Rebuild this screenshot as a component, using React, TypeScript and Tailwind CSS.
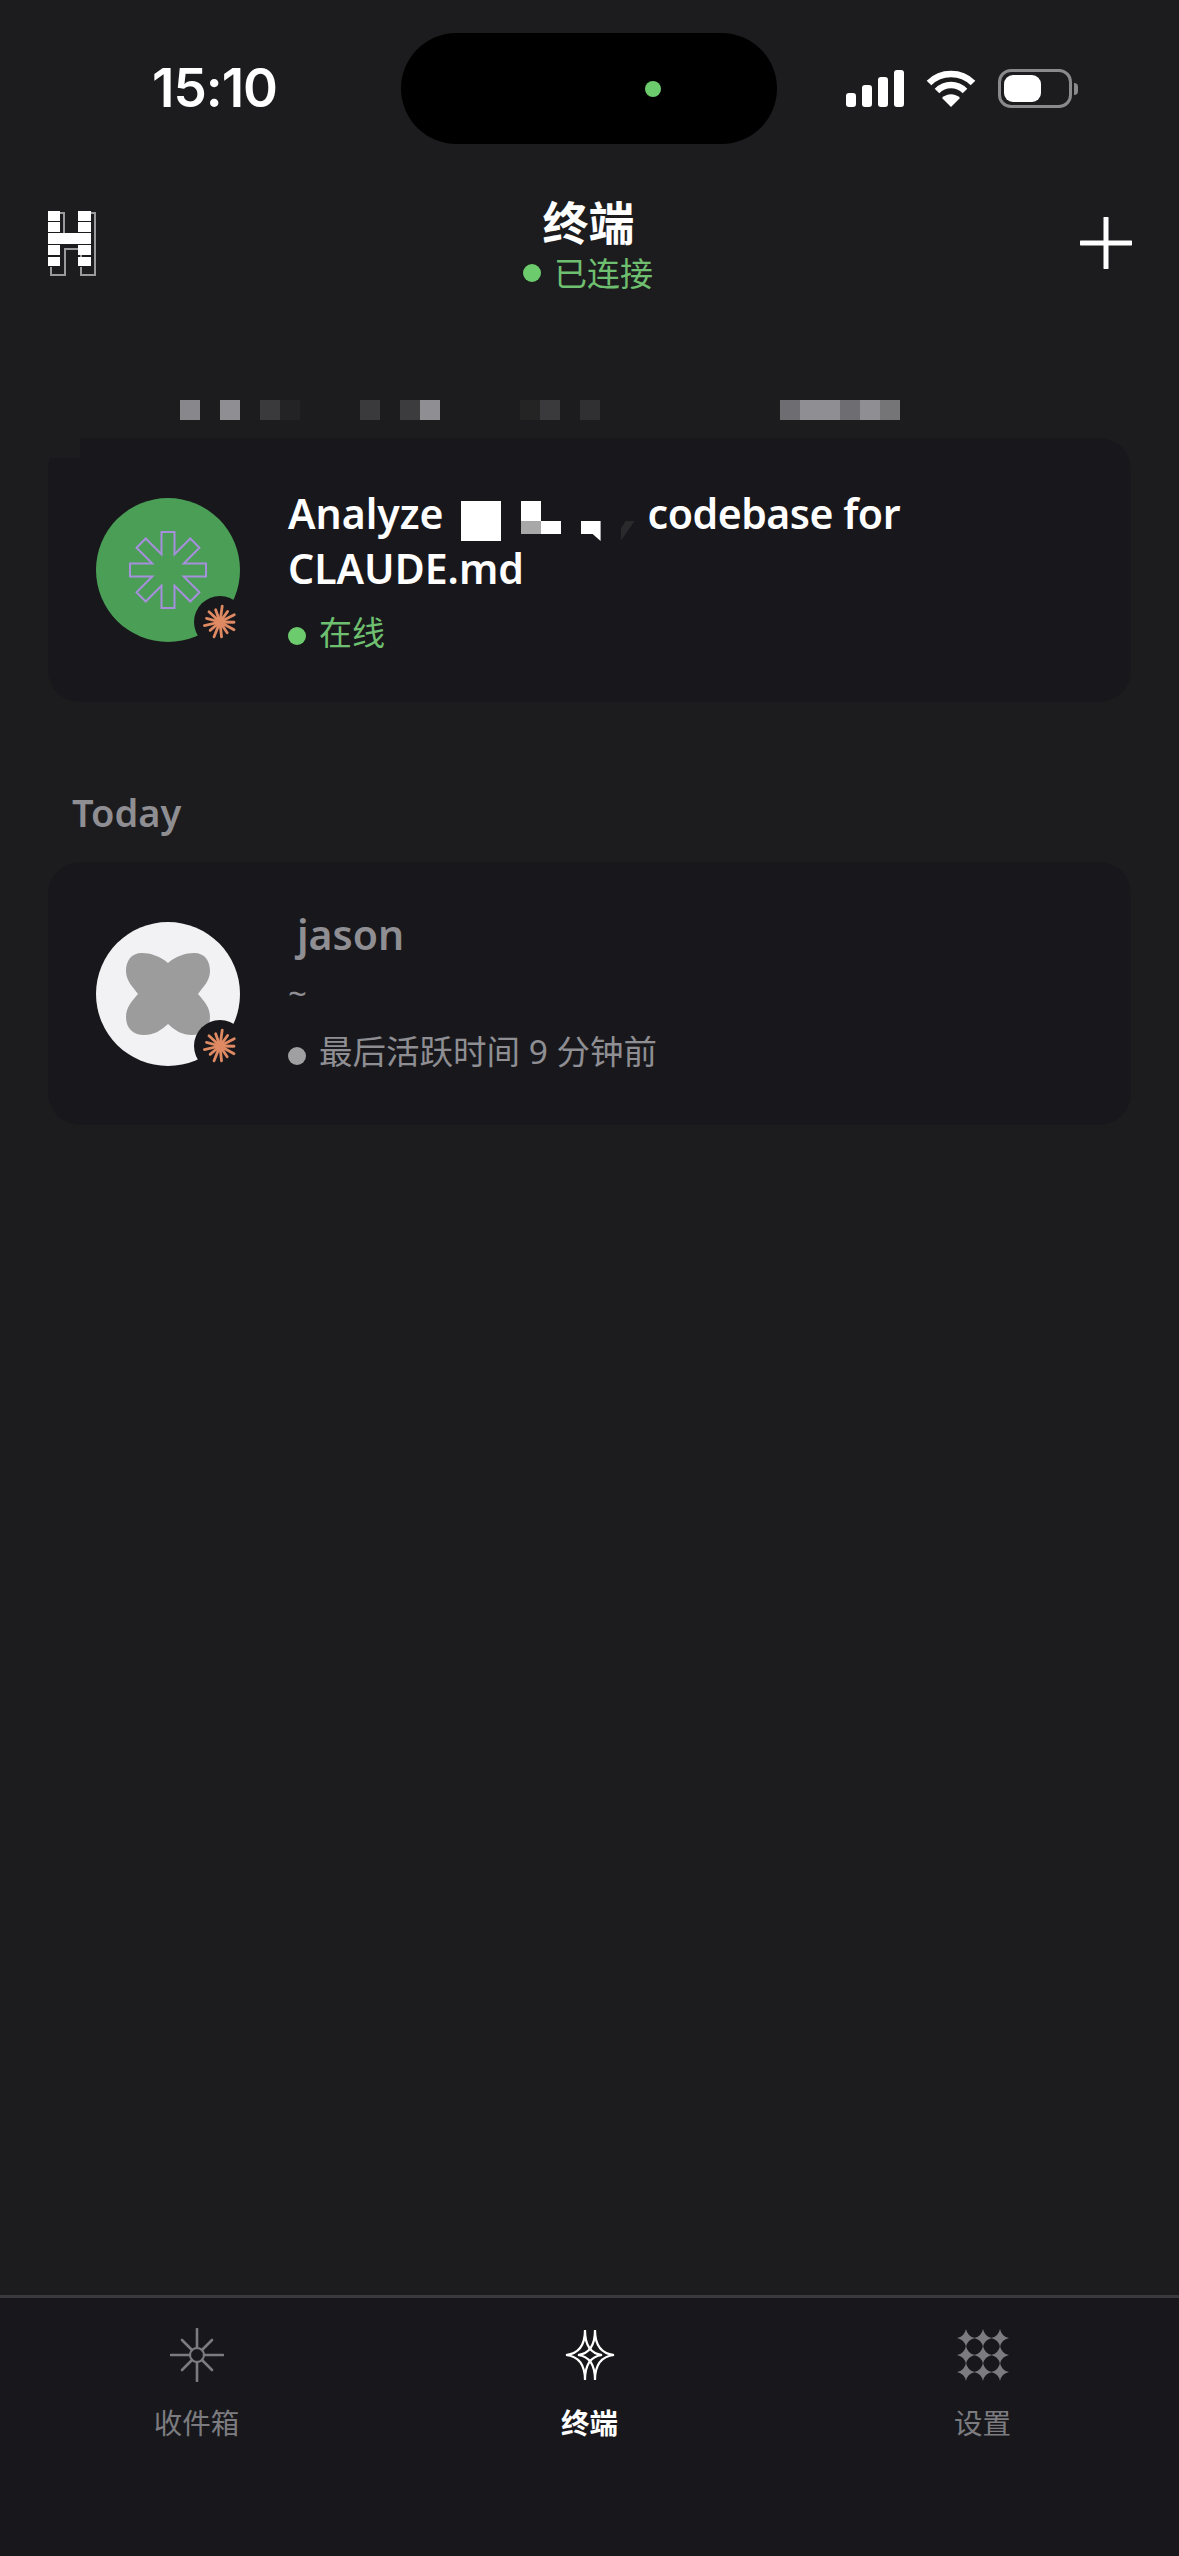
const pixelCells = [
  "w-5 bg-[#88888c]",
  "w-5",
  "w-5 bg-[#8e8e93]",
  "w-5",
  "w-5 bg-[#3a3a3c]",
  "w-5 bg-[#232325]",
  "w-5",
  "w-5",
  "w-5",
  "w-5 bg-[#3a3a3c]",
  "w-5",
  "w-5 bg-[#3c3c3f]",
  "w-5 bg-[#8e8e93]",
  "w-5",
  "w-5",
  "w-5",
  "w-5",
  "w-5 bg-[#242424]",
  "w-5 bg-[#3a3a3c]",
  "w-5",
  "w-5 bg-[#303032]",
  "w-5",
  "w-5",
  "w-5",
  "w-5",
  "w-5",
  "w-5",
  "w-5",
  "w-5",
  "w-5",
  "w-5 bg-[#6e6e72]",
  "w-10 bg-[#8e8e93]",
  "w-5 bg-[#6e6e72]",
  "w-5 bg-[#8e8e93]",
  "w-5 bg-[#757578]",
];

function polar(cx: number, cy: number, r: number, deg: number) {
  const a = (deg * Math.PI) / 180;
  return [cx + r * Math.sin(a), cy - r * Math.cos(a)];
}

function ClaudeBadge() {
  const rays = [16, 13, 16, 14, 16, 13, 15, 16, 13, 16, 14, 15, 13];
  return (
    <div className="absolute left-[98px] top-[98px] flex h-[52px] w-[52px] items-center justify-center rounded-full bg-[#18181c]">
      <svg width="36" height="36" viewBox="0 0 36 36">
        {rays.map((r, i) => {
          const [x, y] = polar(18, 18, r, (i * 360) / rays.length + 8);
          return (
            <line
              key={i}
              x1="18"
              y1="18"
              x2={x}
              y2={y}
              stroke="#df8a63"
              strokeWidth="2.8"
              strokeLinecap="round"
            />
          );
        })}
      </svg>
    </div>
  );
}

function AsteriskOutline() {
  const pts: string[] = [];
  for (let i = 0; i < 8; i++) {
    const deg = i * 45;
    const a = (deg * Math.PI) / 180;
    const ux = Math.sin(a);
    const uy = -Math.cos(a);
    const px = Math.cos(a);
    const py = Math.sin(a);
    const R = 38;
    const w = 6.5;
    pts.push(`${40 + ux * R - px * w},${40 + uy * R - py * w}`);
    pts.push(`${40 + ux * R + px * w},${40 + uy * R + py * w}`);
    const [ix, iy] = polar(40, 40, 17, deg + 22.5);
    pts.push(`${ix},${iy}`);
  }
  return (
    <svg width="80" height="80" viewBox="0 0 80 80">
      <polygon points={pts.join(" ")} fill="none" stroke="#a68fdc" strokeWidth="2" />
    </svg>
  );
}

function Clover() {
  return (
    <svg width="84" height="82" viewBox="0 0 84 82">
      <path
        fill="#9c9c9c"
        d="M42 10C50 3 60 0 68 0C79 0 84 8 84 18C84 28 77 34 72 41C78 48 84 54 84 64C84 76 76 82 66 82C56 82 50 78 42 71C34 78 28 82 18 82C8 82 0 76 0 64C0 54 6 48 12 41C7 34 0 28 0 18C0 8 5 0 16 0C24 0 34 3 42 10Z"
      />
    </svg>
  );
}

function HLogo() {
  return (
    <svg width="50" height="68" viewBox="0 0 50 68">
      <path
        d="M13 4H17V24M44 4H48V66H34V58M4 58V66H18V40H34V48"
        fill="none"
        stroke="#9a9a9c"
        strokeWidth="2"
      />
      <g fill="#fff">
        <rect x="1" y="2" width="12" height="10" />
        <rect x="1" y="13" width="12" height="10" />
        <rect x="31" y="2" width="13" height="10" />
        <rect x="31" y="13" width="13" height="10" />
        <rect x="1" y="24" width="43" height="11" />
        <rect x="1" y="36" width="12" height="10" />
        <rect x="1" y="48" width="12" height="9" />
        <rect x="31" y="36" width="13" height="10" />
        <rect x="31" y="48" width="13" height="9" />
      </g>
    </svg>
  );
}

function StatusIcons() {
  return (
    <div className="flex items-center gap-[22px]">
      <div className="flex h-[37px] items-end gap-[6px]">
        <span className="h-[14px] w-[10px] rounded-[3px] bg-white" />
        <span className="h-[22px] w-[10px] rounded-[3px] bg-white" />
        <span className="h-[30px] w-[10px] rounded-[3px] bg-white" />
        <span className="h-[37px] w-[10px] rounded-[3px] bg-white" />
      </div>
      <svg width="50" height="37" viewBox="0 0 50 37">
        <path d="M25 37L16 28C21 23 29 23 34 28Z" fill="#fff" />
        <path d="M11 21C19 13 31 13 39 21" fill="none" stroke="#fff" strokeWidth="6.5" />
        <path d="M3 13C15 1 35 1 47 13" fill="none" stroke="#fff" strokeWidth="6.5" />
      </svg>
      <div className="flex items-center gap-[2px]">
        <div className="flex h-[39px] w-[74px] items-center rounded-[13px] border-[3px] border-[#8a8a8c] pl-[3px]">
          <span className="h-[27px] w-[37px] rounded-[9px] bg-white" />
        </div>
        <span className="h-[12px] w-[4px] rounded-r-full bg-[#8a8a8c]" />
      </div>
    </div>
  );
}

function InboxIcon() {
  return (
    <svg width="54" height="54" viewBox="0 0 54 54">
      <g stroke="#7c7c80" strokeWidth="2.6" strokeLinecap="round">
        <line x1="27" y1="1" x2="27" y2="20" />
        <line x1="27" y1="34" x2="27" y2="53" />
        <line x1="1" y1="27" x2="20" y2="27" />
        <line x1="34" y1="27" x2="53" y2="27" />
        <line x1="12" y1="12" x2="22" y2="22" />
        <line x1="42" y1="12" x2="32" y2="22" />
        <line x1="12" y1="42" x2="22" y2="32" />
        <line x1="42" y1="42" x2="32" y2="32" />
      </g>
      <circle cx="27" cy="27" r="7" fill="none" stroke="#7c7c80" strokeWidth="2" />
    </svg>
  );
}

function TerminalIcon() {
  return (
    <svg width="50" height="52" viewBox="0 0 50 52">
      <g fill="none" stroke="#fff" strokeWidth="2.2">
        <path d="M20 1Q20 24 1 26Q20 28 20 51Q20 28 37 26Q20 24 20 1Z" />
        <path d="M30 1Q30 24 13 26Q30 28 30 51Q30 28 49 26Q30 24 30 1Z" />
      </g>
    </svg>
  );
}

function SettingsIcon() {
  const pos = [9, 26, 43];
  return (
    <svg width="52" height="52" viewBox="0 0 52 52">
      <g fill="#7c7c80">
        {pos.map((y) =>
          pos.map((x) => (
            <path
              key={`${x}-${y}`}
              d={`M${x} ${y - 9}Q${x + 1.5} ${y - 1.5} ${x + 9} ${y}Q${x + 1.5} ${y + 1.5} ${x} ${y + 9}Q${x - 1.5} ${y + 1.5} ${x - 9} ${y}Q${x - 1.5} ${y - 1.5} ${x} ${y - 9}Z`}
            />
          ))
        )}
      </g>
    </svg>
  );
}

export default function App() {
  return (
    <div className="flex h-[2556px] w-[1179px] flex-col overflow-hidden bg-[#1c1c1e] font-['Noto_Sans','Noto_Sans_CJK_SC',sans-serif]">
      <div className="flex h-[144px] items-start pt-[33px]">
        <div className="flex h-[111px] w-[401px] items-center justify-center pl-[28px]">
          <span className="font-['Inter',sans-serif] text-[53px] leading-none font-semibold tracking-[-1px] text-white">
            15:10
          </span>
        </div>
        <div className="flex h-[111px] w-[376px] items-center justify-end rounded-[56px] bg-black pr-[116px]">
          <span className="h-4 w-4 rounded-full bg-[#6ccb6c]" />
        </div>
        <div className="flex h-[111px] flex-1 items-center pl-[69px]">
          <StatusIcons />
        </div>
      </div>

      <div className="flex items-center justify-between pt-[48px] pr-[47px] pl-[47px]">
        <HLogo />
        <div className="flex flex-col items-center">
          <span className="text-[46px] leading-[60px] font-bold text-white">终端</span>
          <div className="flex h-[42px] items-center gap-[13px] pr-[1px]">
            <span className="h-[18px] w-[18px] rounded-full bg-[#6ccb6c]" />
            <span className="text-[33px] leading-none text-[#6fbf70]">已连接</span>
          </div>
        </div>
        <svg width="52" height="52" viewBox="0 0 52 52">
          <path d="M26 1V51M1 26H51" stroke="#fff" strokeWidth="5" strokeLinecap="round" />
        </svg>
      </div>

      <div className="mt-[106px] flex h-5 pl-[180px]">
        {pixelCells.map((c, i) => (
          <span key={i} className={c} />
        ))}
      </div>

      <div className="relative mx-[48px] mt-[18px] flex h-[264px] items-center rounded-[32px] bg-[#18181c] pl-[48px]">
        <span className="absolute top-0 left-0 h-5 w-8 bg-[#1c1c1e]" />
        <div className="relative flex h-[144px] w-[144px] shrink-0 items-center justify-center rounded-full bg-[#4a9e56]">
          <AsteriskOutline />
          <ClaudeBadge />
        </div>
        <div className="ml-[48px] flex flex-col">
          <div className="flex items-start text-[41px] leading-[55px] font-semibold text-white">
            <span>Analyze</span>
            <div className="mt-[15px] ml-[17px] flex h-10 w-[174px] items-start">
              <span className="h-10 w-10 bg-white" />
              <div className="ml-5 flex w-10 flex-col">
                <span className="h-5 w-5 bg-white" />
                <div className="flex h-[13px]">
                  <span className="w-5 bg-[#a8a8a8]" />
                  <span className="w-5 bg-white" />
                </div>
              </div>
              <span className="mt-5 ml-5 h-[20px] w-5 bg-white [clip-path:polygon(0_0,100%_0,100%_100%,60%_65%,0_65%)]" />
              <span className="mt-5 ml-5 h-5 w-[14px] bg-[#2a2a2c] [clip-path:polygon(35%_0,100%_0,0_100%,0_40%)]" />
            </div>
            <span className="ml-[13px] tracking-[-0.5px]">codebase for</span>
          </div>
          <span className="text-[41px] leading-[55px] font-semibold text-white">CLAUDE.md</span>
          <div className="mt-[14px] flex h-[44px] items-center gap-[13px]">
            <span className="mt-2 h-[18px] w-[18px] rounded-full bg-[#6ccb6c]" />
            <span className="text-[33px] leading-none text-[#6fbf70]">在线</span>
          </div>
        </div>
      </div>

      <div className="mt-[85px] pl-[72px] text-[38px] leading-[50px] font-semibold text-[#8e8e93]">Today</div>

      <div className="mx-[48px] mt-[25px] flex h-[263px] items-center rounded-[32px] bg-[#18181c] pl-[48px]">
        <div className="relative flex h-[144px] w-[144px] shrink-0 items-center justify-center rounded-full bg-[#f2f2f4]">
          <Clover />
          <ClaudeBadge />
        </div>
        <div className="ml-[48px] flex flex-col">
          <span className="pl-[9px] text-[41px] leading-[55px] font-semibold text-[#8e8e93]">jason</span>
          <span className="h-[62px] text-[33px] leading-[62px] text-[#8e8e93]">~</span>
          <div className="flex h-[56px] items-center gap-[13px]">
            <span className="mt-2 h-[18px] w-[18px] rounded-full bg-[#a0a0a2]" />
            <span className="text-[33.5px] leading-none text-[#8e8e93]">最后活跃时间 9 分钟前</span>
          </div>
        </div>
      </div>

      <div className="mt-auto flex h-[261px] items-start border-t-[3px] border-[#3a3a3c] bg-[#18181c] pt-[30px]">
        <div className="flex w-[393px] flex-col items-center">
          <div className="flex h-[54px] items-center"><InboxIcon /></div>
          <span className="mt-[23px] text-[28.5px] leading-[36px] text-[#7c7c80]">收件箱</span>
        </div>
        <div className="flex w-[393px] flex-col items-center">
          <div className="flex h-[54px] items-center"><TerminalIcon /></div>
          <span className="mt-[23px] text-[28.5px] leading-[36px] font-semibold text-white">终端</span>
        </div>
        <div className="flex w-[393px] flex-col items-center">
          <div className="flex h-[54px] items-center"><SettingsIcon /></div>
          <span className="mt-[23px] text-[28.5px] leading-[36px] text-[#7c7c80]">设置</span>
        </div>
      </div>
    </div>
  );
}
